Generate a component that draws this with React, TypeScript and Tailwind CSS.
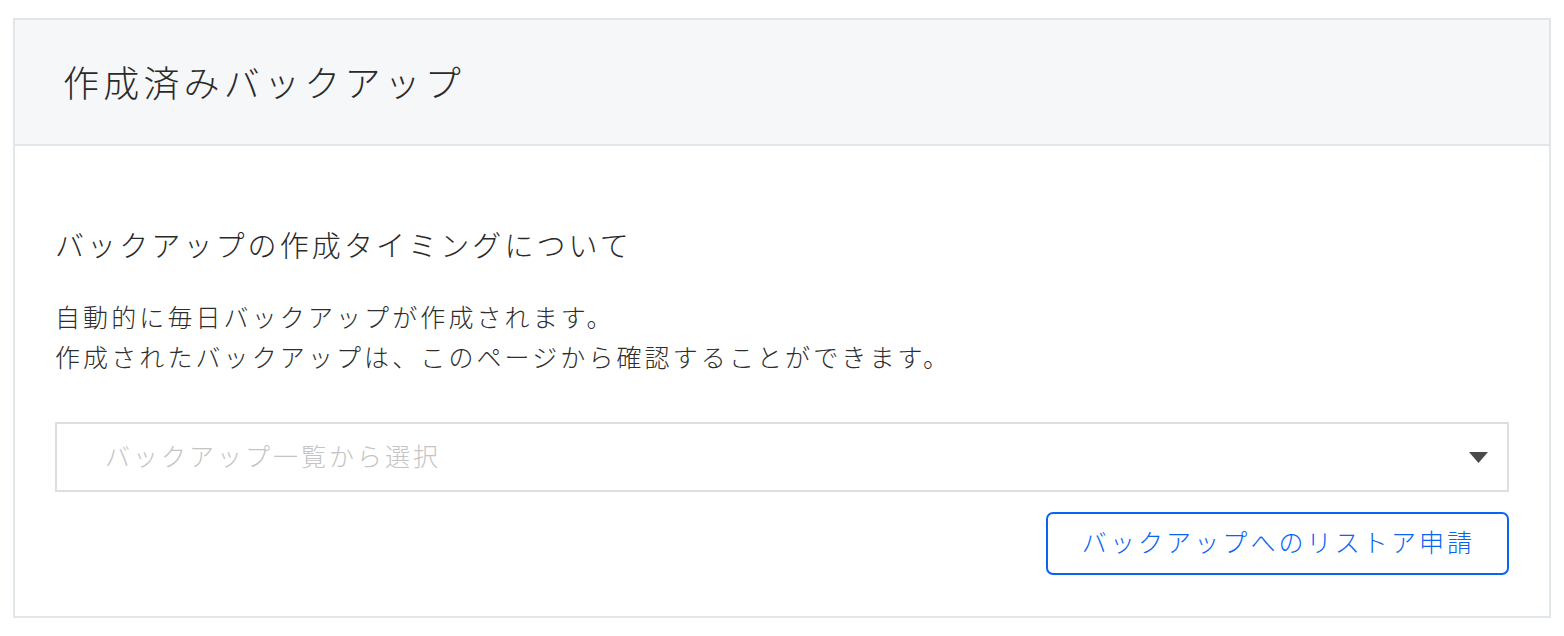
import { useState } from "react";

const jp = { fontFamily: '"Noto Sans CJK JP", "Noto Sans", sans-serif' };

export default function App() {
    const [value] = useState("");

    return (
        <div className="min-h-[636px] bg-white pt-[18px] px-[13px] font-light" style={jp}>
            <div className="border-2 border-[#e1e6ea] bg-white">
                {/* header */}
                <div className="h-[126px] bg-[#f6f7f9] border-b-2 border-[#e1e6ea] flex items-center pl-[48px]">
                    <h1 className="text-[36px] leading-none tracking-[4.2px] text-[#2a2a2a] -mt-[2px]">作成済みバックアップ</h1>
                </div>

                {/* body */}
                <div className="px-[40px] pt-[78px] pb-[41px]">
                    <h2 className="text-[29px] leading-[40px] tracking-[3.1px] text-[#2a2a2a]">バックアップの作成タイミングについて</h2>
                    <p className="mt-[32px] text-[25px] leading-[40px] tracking-[3.1px] text-[#2e2e2e]">
                        自動的に毎日バックアップが作成されます。
                        <br />
                        作成されたバックアップは、このページから確認することができます。
                    </p>

                    <div className="mt-[46px] h-[70px] border-2 border-[#dedede] flex items-center justify-between pl-[48px] pr-[19px]">
                        <span className="text-[25px] tracking-[3px] text-[#c4c4c4] -mt-[3px]">{value || "バックアップ一覧から選択"}</span>
                        <svg width="19" height="11" viewBox="0 0 19 11">
                            <path d="M0 0 H19 L9.5 11 Z" fill="#4a4a4a" />
                        </svg>
                    </div>

                    <div className="flex justify-end mt-[20px]">
                        <button className="w-[463px] h-[63px] rounded-[7px] border-2 border-[#0a63f5] text-[#0a63f5] text-[25px] tracking-[3.1px] flex items-center justify-center pl-[2px] pb-[3px]">
                            バックアップへのリストア申請
                        </button>
                    </div>
                </div>
            </div>
        </div>
    );
}
